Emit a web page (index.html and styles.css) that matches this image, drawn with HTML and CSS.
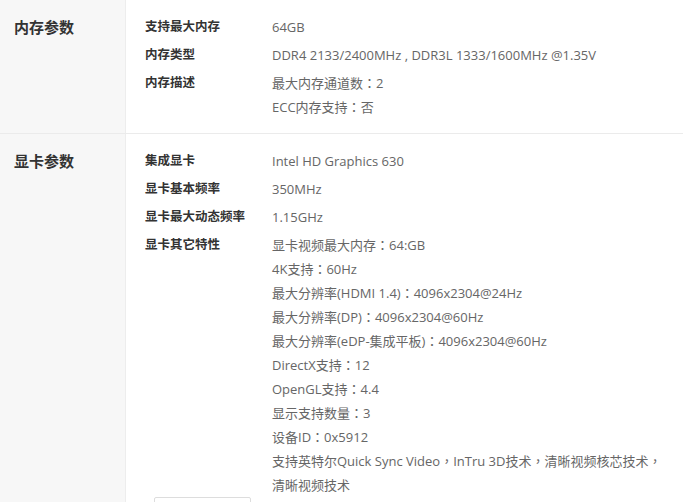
FILE: index.html
```html
<!DOCTYPE html>
<html lang="zh-CN">
<head>
<meta charset="utf-8">
<title>参数</title>
<link rel="stylesheet" href="styles.css">
</head>
<body>
<div class="spec">
  <div class="section">
    <div class="section-title">内存参数</div>
    <div class="section-body">
      <div class="row"><div class="label">支持最大内存</div><div class="value">64GB</div></div>
      <div class="row"><div class="label">内存类型</div><div class="value">DDR4 2133/2400MHz , DDR3L 1333/1600MHz @1.35V</div></div>
      <div class="row"><div class="label">内存描述</div><div class="value">最大内存通道数<span class="p" lang="zh-Hant">：</span>2<br>ECC内存支持<span class="p" lang="zh-Hant">：</span>否</div></div>
    </div>
  </div>
  <div class="section">
    <div class="section-title">显卡参数</div>
    <div class="section-body">
      <div class="row"><div class="label">集成显卡</div><div class="value">Intel HD Graphics 630</div></div>
      <div class="row"><div class="label">显卡基本频率</div><div class="value">350MHz</div></div>
      <div class="row"><div class="label">显卡最大动态频率</div><div class="value">1.15GHz</div></div>
      <div class="row"><div class="label">显卡其它特性</div><div class="value">显卡视频最大内存<span class="p" lang="zh-Hant">：</span>64:GB<br>4K支持<span class="p" lang="zh-Hant">：</span>60Hz<br>最大分辨率(HDMI 1.4)<span class="p" lang="zh-Hant">：</span>4096x2304@24Hz<br>最大分辨率(DP)<span class="p" lang="zh-Hant">：</span>4096x2304@60Hz<br>最大分辨率(eDP-集成平板)<span class="p" lang="zh-Hant">：</span>4096x2304@60Hz<br>DirectX支持<span class="p" lang="zh-Hant">：</span>12<br>OpenGL支持<span class="p" lang="zh-Hant">：</span>4.4<br>显示支持数量<span class="p" lang="zh-Hant">：</span>3<br>设备ID<span class="p" lang="zh-Hant">：</span>0x5912<br>支持英特尔Quick Sync Video<span class="p" lang="zh-Hant">，</span>InTru 3D技术<span class="p" lang="zh-Hant">，</span>清晰视频核芯技术<span class="p" lang="zh-Hant">，</span><br>清晰视频技术</div></div>
      <div class="more-wrap"><button class="more" type="button" aria-label="查看更多"></button></div>
    </div>
  </div>
</div>
</body>
</html>
```

FILE: styles.css
```css
html, body {
  margin: 0;
  padding: 0;
  background: #ffffff;
}
body {
  font-family: "Open Sans", "Noto Sans CJK SC", sans-serif;
  color: #333333;
}
.spec {
  width: 683px;
}
.section {
  display: flex;
  border-bottom: 1px solid #ebebeb;
}
.section-title {
  width: 111px;
  flex: 0 0 auto;
  background: #f7f7f7;
  border-right: 1px solid #ededed;
  padding: 15px 0 0 14px;
  font-size: 15px;
  font-weight: bold;
  line-height: 24px;
  color: #333333;
}
.section-body {
  flex: 1;
  display: flex;
  flex-direction: column;
  gap: 4px;
  padding: 15px 0 14px 19px;
}
.row {
  display: grid;
  grid-template-columns: 127px 1fr;
  line-height: 24px;
  font-size: 13px;
}
.label {
  font-weight: bold;
  color: #333333;
  font-size: 12.5px;
}
.value {
  color: #666666;
}
.p {
  font-family: "Noto Sans CJK TC", "Noto Sans CJK SC", sans-serif;
}
.more-wrap {
  margin-top: -4px;
  padding-left: 9px;
}
.more {
  display: block;
  width: 97px;
  height: 30px;
  border: 1px solid #dddddd;
  border-radius: 2px;
  background: #ffffff;
}
```
